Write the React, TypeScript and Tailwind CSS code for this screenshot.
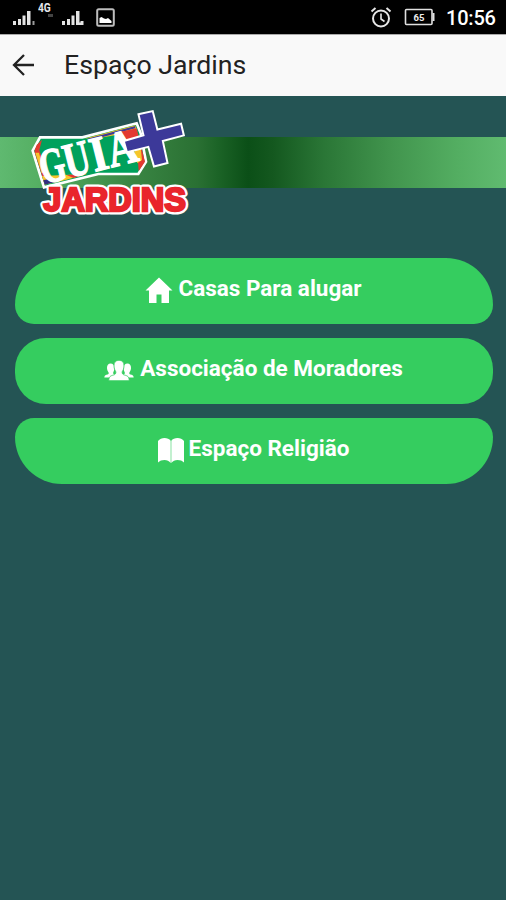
import type { ReactNode } from "react";

function Signal({ short = false }: { short?: boolean }) {
  return (
    <svg width="24" height="16" viewBox="0 0 24 16" fill="#e4e4e4">
      <rect x="0" y="11" width="3" height="4" />
      <rect x="5" y="9" width="3" height="6" />
      <rect x="9.5" y="5.5" width="3" height="9.5" />
      <rect x="14" y="1" width="3.5" height="14" />
      {short ? (
        <path d="M14 12.500h4.500V11H21.500V15h-7.500z" />
      ) : (
        <rect x="19.5" y="11" width="2" height="4" fill="#9a9a9a" />
      )}
    </svg>
  );
}

function StatusBar() {
  return (
    <div className="flex h-[34px] items-center bg-black pl-[13px] pr-[11px] text-white">
      <div className="flex items-center pt-px">
        <Signal />
        <div className="relative -mt-[20px] w-[25px] text-[12px] font-bold leading-none text-gray-200">
          <span className="ml-px inline-block origin-left scale-x-[0.85]">4G</span>
          <span className="absolute left-[11px] top-[12px] h-[3px] w-[5px] bg-[#444]" />
        </div>
        <Signal short />
        <svg className="ml-[10px]" width="19" height="19" viewBox="0 0 19 19">
          <rect x="1.2" y="1.2" width="16.6" height="16.6" rx="1.5" fill="none" stroke="#bdbdbd" strokeWidth="2" />
          <path d="M3.500 15V10l2-1 2.500 1.500 2 .5 2-1 3.500 3V15z" fill="#fff" />
        </svg>
      </div>
      <div className="ml-auto flex items-center">
        <svg width="22" height="22" viewBox="0 0 22 22" fill="none" stroke="#e6e6e6" strokeWidth="2">
          <circle cx="11" cy="12.500" r="8" />
          <path d="M11 7.500v5.500l3.500 2.500" strokeWidth="1.6" />
          <path d="M1.500 5.500l4-3.500M20.500 5.500l-4-3.500" />
        </svg>
        <svg className="ml-[12px]" width="32" height="18" viewBox="0 0 32 18">
          <rect x="1.500" y="1.500" width="26.500" height="15" rx="1" fill="none" stroke="#e0e0e0" strokeWidth="1.600" />
          <path d="M29.500 5v8" stroke="#e0e0e0" strokeWidth="2" />
          <text x="15" y="12.500" textAnchor="middle" fontFamily="Roboto" fontSize="9.5" fontWeight="700" fill="#eee">
            65
          </text>
        </svg>
        <span className="ml-[10px] w-[49px] whitespace-nowrap pt-[2px] text-[20px] font-medium leading-none tracking-[-0.2px]">
          10:56
        </span>
      </div>
    </div>
  );
}

function Header() {
  return (
    <header className="flex h-[62px] items-center border-t border-[#aaa] bg-[#f9f9f9] pb-px pl-[12px]">
      <svg width="24" height="24" viewBox="0 0 24 24" fill="none" stroke="#222" strokeWidth="2.300">
        <path d="M22 12H2M12 2L2 12l10 10" />
      </svg>
      <h1 className="ml-[28px] text-[26.7px] leading-none text-[#222]">Espaço Jardins</h1>
    </header>
  );
}

const letters = [
  { char: "G", x: 0, width: 76 },
  { char: "U", x: 74, width: 78 },
  { char: "I", x: 156, width: 50 },
  { char: "A", x: 208, width: 90 },
];

function Logo() {
  return (
    <svg className="absolute left-[20px] top-[4px]" width="180" height="125" viewBox="0 0 540 375">
      <path
        d="M60 112H187L350 70L362 100L378 185L355 222H235L72 262L38 152Z"
        fill="#00a15c"
        stroke="#fff"
        strokeWidth="8"
      />
      <path d="M50 135L66 119L58 150L80 222L72 246L43 153Z" fill="#e33a31" />
      <path d="M46 158L57 158L72 216L65 220Z" fill="#f6c52b" />
      <path d="M66 228L200 222L140 239L74 254Z" fill="#f6c52b" />
      <path d="M140 225L200 222L160 234Z" fill="#e33a31" />
      <path d="M70 240L100 236L115 244L74 254Z" fill="#322e7e" />
      <path d="M192 116L346 76L352 94L250 112Z" fill="#f6c52b" />
      <path d="M202 116L346 78L346 85L215 120Z" fill="#413b95" />
      <path d="M300 96L350 85L375 185L356 214L352 160Z" fill="#e33a31" />
      <path d="M342 145L362 142L366 180L352 190Z" fill="#f6c52b" />
      <g
        transform="translate(72 253) rotate(-14)"
        fontFamily="'Liberation Serif', serif"
        fontWeight="700"
        fontSize="148"
        fill="#fff"
        stroke="#fff"
        strokeWidth="4"
      >
        {letters.map(({ char, x, width }) => (
          <text key={char} x={x} y="0" textLength={width} lengthAdjust="spacingAndGlyphs">
            {char}
          </text>
        ))}
      </g>
      <path
        d="M359 45L396 37L410 92L481 75L488 104L425 121L439 187L404 196L387 137L323 153L315 125L374 108Z"
        fill="#3c3999"
        stroke="#fff"
        strokeWidth="12"
        paintOrder="stroke"
      />
      <text
        x="70"
        y="333"
        textLength="428"
        lengthAdjust="spacingAndGlyphs"
        fontFamily="'Liberation Sans', Arial, sans-serif"
        fontWeight="700"
        fontSize="98"
        fill="#fff"
        stroke="#fff"
        strokeWidth="21"
        strokeLinejoin="round"
      >
        JARDINS
      </text>
      <text
        x="70"
        y="333"
        textLength="428"
        lengthAdjust="spacingAndGlyphs"
        fontFamily="'Liberation Sans', Arial, sans-serif"
        fontWeight="700"
        fontSize="98"
        fill="#e9252c"
        stroke="#e9252c"
        strokeWidth="7"
      >
        JARDINS
      </text>
    </svg>
  );
}

function Banner() {
  return (
    <div className="relative pb-[69px] pt-[41px]">
      <div className="h-[51px] bg-[linear-gradient(90deg,#5fb970_0%,#56b064_7%,#3b8845_25%,#2a7033_39%,#1c6427_43%,#0b4f17_49%,#14581f_54%,#2a7636_64%,#41944d_77%,#53ad61_90%,#60bb70_100%)]" />
      <Logo />
    </div>
  );
}

function HomeIcon() {
  return (
    <svg className="mt-[3px]" width="28" height="26" viewBox="0 0 28 26" fill="#fff">
      <path d="M14 .5L27.500 13.500H24V26H16.500V17.500H11.500V26H4V13.500H.5z" />
    </svg>
  );
}

function PeopleIcon() {
  return (
    <svg className="mt-[4px]" width="30" height="21" viewBox="0 0 30 21" fill="#fff">
      <path d="M6.500 3.500c2.500 0 3.900 1.600 3.900 4.500 0 2.200-.8 3.500-1.200 4.500-.3 1.500 1 2 2 2.500L7.500 17.500H.3c.2-2.500 1.700-2.500 3.200-3 1.200-.4 1.400-1 1.100-2C3.800 11 3 10 3 8c0-2.900 1.300-4.500 3.500-4.500z" />
      <path d="M23.500 3.500c-2.500 0-3.900 1.600-3.900 4.500 0 2.200.8 3.500 1.200 4.500.3 1.500-1 2-2 2.500l3.700 2.500h7.200c-.2-2.500-1.700-2.500-3.200-3-1.200-.4-1.400-1-1.100-2 .8-1.500 1.600-2.500 1.600-4.500 0-2.900-1.300-4.500-3.500-4.500z" />
      <path
        d="M15 .3c3.400 0 5.200 2.200 5 5.700-.1 3-1 4.200-1.700 5.500-.5 1.800.2 3 2.400 3.600 2.500.7 4.500 1.200 4.500 5.600H4.800c0-4.400 2-4.900 4.500-5.600 2.200-.6 2.900-1.800 2.400-3.600C11 10.200 10.100 9 10 6 9.800 2.500 11.600.3 15 .3z"
        stroke="#35cd5f"
        strokeWidth=".8"
      />
    </svg>
  );
}

function BookIcon() {
  return (
    <svg className="mt-[3px]" width="26" height="25" viewBox="0 0 26 25" fill="#fff">
      <path d="M0 3C1.500 1 4 0 6.500 0s5 1 6.200 2.800V25c-1.500-2-3.700-3-6.200-3S1.500 22.800 0 24.500z" />
      <path d="M26 3c-1.500-2-4-3-6.500-3s-5 1-6.200 2.800V25c1.500-2 3.700-3 6.200-3s5 .8 6.500 2.500z" />
    </svg>
  );
}

const menu: { name: string; icon: ReactNode; gap: string; shape: string }[] = [
  {
    name: "Casas Para alugar",
    icon: <HomeIcon />,
    gap: "gap-[5px]",
    shape: "rounded-t-[47px] rounded-b-[19px]",
  },
  {
    name: "Associação de Moradores",
    icon: <PeopleIcon />,
    gap: "gap-[6px]",
    shape: "rounded-[31px]",
  },
  {
    name: "Espaço Religião",
    icon: <BookIcon />,
    gap: "gap-[5px]",
    shape: "rounded-t-[19px] rounded-b-[47px]",
  },
];

export default function App() {
  return (
    <div className="h-[900px] w-[506px] overflow-hidden bg-[#245454] font-[Roboto,sans-serif]">
      <StatusBar />
      <Header />
      <Banner />
      <nav className="flex flex-col gap-[14px] pl-[14.5px] pr-[13.5px] pt-[0.5px]">
        {menu.map(({ name, icon, gap, shape }) => (
          <button
            key={name}
            className={`flex h-[66px] w-full items-center justify-center bg-[#35cd5f] pb-[4px] text-[22.5px] font-bold leading-none text-white ${gap} ${shape}`}
          >
            {icon}
            <span>{name}</span>
          </button>
        ))}
      </nav>
    </div>
  );
}
